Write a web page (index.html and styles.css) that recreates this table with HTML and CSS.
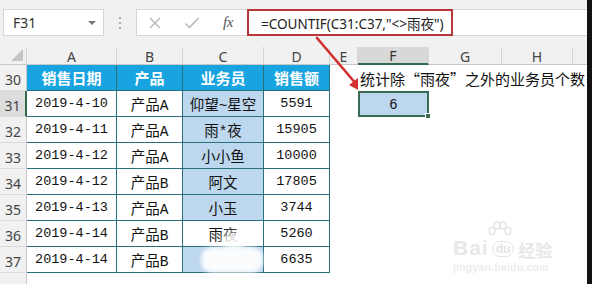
FILE: index.html
```html
<!DOCTYPE html>
<html lang="zh-CN">
<head>
<meta charset="utf-8">
<title>COUNTIF</title>
<link rel="stylesheet" href="styles.css">
</head>
<body>
<div class="frame">
  <div class="app">
    <div class="toolbar">
      <div class="namebox">
        <span class="name">F31</span>
        <span class="caret"></span>
      </div>
      <div class="dots"><i></i><i></i><i></i></div>
      <div class="fbar">
        <div class="fbtns">
          <svg class="ico" width="14" height="14" viewBox="0 0 14 14"><path d="M2 2 L12 12 M12 2 L2 12" stroke="#b4b4b4" stroke-width="1.3" fill="none"/></svg>
          <svg class="ico" width="16" height="14" viewBox="0 0 16 14"><path d="M1.5 7.5 L5.5 11.5 L14.5 2" stroke="#b4b4b4" stroke-width="1.4" fill="none"/></svg>
          <span class="fx">fx</span>
        </div>
        <div class="formula">=COUNTIF(C31:C37,"&lt;&gt;雨夜")</div>
      </div>
    </div>

    <div class="sheet">
      <div class="ch corner"><span class="tri"></span></div>
      <div class="ch">A</div><div class="ch">B</div><div class="ch">C</div><div class="ch">D</div>
      <div class="ch">E</div><div class="ch sel">F</div><div class="ch">G</div><div class="ch">H</div><div class="ch last"></div>

      <div class="rh">30</div>
      <div class="c th">销售日期</div><div class="c th">产品</div><div class="c th">业务员</div><div class="c th">销售额</div>
      <div class="c e"></div><div class="c note">统计除“雨夜”之外的业务员个数</div><div class="c"></div><div class="c"></div><div class="c"></div>

      <div class="rh rsel">31</div>
      <div class="c t num">2019-4-10</div><div class="c t">产品A</div><div class="c t hl">仰望~星空</div><div class="c t num">5591</div>
      <div class="c e"></div><div class="c active">6<span class="handle"></span></div><div class="c"></div><div class="c"></div><div class="c"></div>

      <div class="rh">32</div>
      <div class="c t num">2019-4-11</div><div class="c t">产品A</div><div class="c t hl">雨*夜</div><div class="c t num">15905</div>
      <div class="c e"></div><div class="c"></div><div class="c"></div><div class="c"></div><div class="c"></div>

      <div class="rh">33</div>
      <div class="c t num">2019-4-12</div><div class="c t">产品A</div><div class="c t hl">小小鱼</div><div class="c t num">10000</div>
      <div class="c e"></div><div class="c"></div><div class="c"></div><div class="c"></div><div class="c"></div>

      <div class="rh">34</div>
      <div class="c t num">2019-4-12</div><div class="c t">产品B</div><div class="c t hl">阿文</div><div class="c t num">17805</div>
      <div class="c e"></div><div class="c"></div><div class="c"></div><div class="c"></div><div class="c"></div>

      <div class="rh">35</div>
      <div class="c t num">2019-4-13</div><div class="c t">产品A</div><div class="c t hl">小玉</div><div class="c t num">3744</div>
      <div class="c e"></div><div class="c"></div><div class="c"></div><div class="c"></div><div class="c"></div>

      <div class="rh">36</div>
      <div class="c t num">2019-4-14</div><div class="c t">产品B</div><div class="c t">雨夜</div><div class="c t num">5260</div>
      <div class="c e"></div><div class="c"></div><div class="c"></div><div class="c"></div><div class="c"></div>

      <div class="rh">37</div>
      <div class="c t num">2019-4-14</div><div class="c t">产品B</div><div class="c t hl"></div><div class="c t num">6635</div>
      <div class="c e"></div><div class="c"></div><div class="c"></div><div class="c"></div><div class="c"></div>

      <div class="rh"></div>
      <div class="c"></div><div class="c"></div><div class="c"></div><div class="c"></div>
      <div class="c"></div><div class="c"></div><div class="c"></div><div class="c"></div><div class="c"></div>
    </div>

    <div class="redbox"></div>
    <svg class="arrow" width="80" height="80" viewBox="0 0 80 80">
      <path d="M4 4 L44 51" stroke="#d22f2f" stroke-width="2.6" fill="none" stroke-linecap="round"/>
      <path d="M49 58 L36 51 L45 44 Z" fill="#d22f2f"/>
    </svg>
    <div class="blot"></div>
    <div class="blot2"></div>
    <div class="watermark">
      <svg class="paw" width="26" height="18" viewBox="0 0 26 18">
        <g fill="none" stroke="#e4e4e4" stroke-width="1.4">
          <ellipse cx="5" cy="10" rx="3" ry="3.5"/>
          <ellipse cx="10" cy="4.5" rx="3" ry="3.5"/>
          <ellipse cx="16" cy="4.5" rx="3" ry="3.5"/>
          <ellipse cx="21" cy="10" rx="3" ry="3.5"/>
        </g>
      </svg>
      <div class="wm-top"><span class="wm-bai">Bai</span><span class="wm-du">du</span><span class="wm-jy">经验</span></div>
      <div class="wm-url">jingyan.baidu.com</div>
    </div>
  </div>
  <div class="edge"></div>
</div>
</body>
</html>
```

FILE: styles.css
```css
* { box-sizing: border-box; }
html, body { margin: 0; padding: 0; }
body { width: 592px; height: 284px; overflow: hidden; background: #fff; font-family: "Noto Sans", "Noto Sans CJK SC", sans-serif; }

.frame { display: flex; width: 592px; height: 284px; }
.app { position: relative; width: 587px; height: 284px; overflow: hidden; background: #fff; }
.edge { width: 5px; height: 284px; background: #111; }

.toolbar { height: 47px; background: #f1f1f1; display: flex; align-items: flex-start; padding: 9px 0 0 3px; }
.namebox { width: 101px; height: 27px; background: #fff; border: 1px solid #d6d6d6; display: flex; align-items: center; justify-content: space-between; padding: 0 7px 0 9px; }
.name { font-size: 14px; color: #333; }
.caret { width: 0; height: 0; border-left: 4px solid transparent; border-right: 4px solid transparent; border-top: 4px solid #777; }
.dots { width: 32px; height: 27px; display: flex; flex-direction: column; align-items: center; justify-content: center; gap: 3px; }
.dots i { display: block; width: 2px; height: 2px; background: #aaa; }
.fbar { flex: 1; height: 27px; background: #fff; border: 1px solid #d6d6d6; border-right: none; display: flex; align-items: center; }
.fbtns { width: 111px; display: flex; align-items: center; padding-left: 11px; gap: 0; }
.fbtns .ico:first-child { margin-right: 22px; }
.fbtns .ico:nth-child(2) { margin-right: 23px; }
.fx { font-family: "Liberation Serif", serif; font-style: italic; font-size: 15px; color: #555; letter-spacing: -0.5px; }
.formula { font-family: "Noto Sans", "Noto Sans CJK SC", sans-serif; font-size: 13.5px; color: #222; padding-left: 13px; white-space: nowrap; }

.sheet { display: grid; grid-template-columns: 27px 90px 66px 81px 66px 28px 71px 73px 71px 14px; grid-template-rows: 18px repeat(8, 26px) 20px; }
.ch { background: #f1f1f1; border-right: 1px solid #d4d4d4; border-bottom: 1px solid #c8c8c8; font-family: "Noto Sans", sans-serif; font-size: 14px; color: #444; display: flex; align-items: center; justify-content: center; line-height: 1; padding-top: 2px; }
.ch.sel { background: #d8d8d8; border-bottom: 2px solid #2f6a4c; color: #333; }
.ch.last { border-right: none; }
.corner { position: relative; }
.tri { position: absolute; right: 3px; bottom: 3px; width: 0; height: 0; border-left: 12px solid transparent; border-bottom: 12px solid #c4c4c4; }

.rh { background: #f1f1f1; border-right: 1px solid #c8c8c8; border-bottom: 1px solid #dadada; font-family: "Noto Sans", sans-serif; font-size: 14px; color: #444; display: flex; align-items: flex-end; justify-content: center; padding-bottom: 1px; line-height: 1.2; }
.rh.rsel { background: #dcdcdc; border-right: 2px solid #2f6a4c; }

.c { background: #fff; display: flex; align-items: center; justify-content: center; font-family: "Noto Sans CJK SC", sans-serif; font-size: 14.5px; color: #111; white-space: nowrap; }
.c.th { background: #18a3e1; color: #fff; font-weight: 700; font-size: 15px; border-right: 1px solid #2a6f7d; border-bottom: 1px solid #2a6f7d; }
.c.t { border-right: 1px solid #2a6f7d; border-bottom: 1px solid #2a6f7d; font-family: "Liberation Mono", "Noto Sans CJK SC", monospace; font-size: 14.5px; }
.c.t.num { font-size: 13.5px; }
.c.hl { background: #bdd7ee; }
.c.note { justify-content: flex-start; padding-left: 2px; overflow: visible; font-size: 15px; position: relative; z-index: 1; }
.c.active { position: relative; background: #bdd7ee; border: 2px solid #3a6b55; font-family: "Liberation Sans", sans-serif; font-size: 14px; }
.handle { position: absolute; right: -4px; bottom: -4px; width: 6px; height: 6px; background: #3a6b55; border: 1px solid #fff; }

.redbox { position: absolute; left: 247px; top: 9px; width: 206px; height: 27px; border: 2.5px solid #b8353a; }
.arrow { position: absolute; left: 313px; top: 34px; }

.blot { position: absolute; left: 201px; top: 247px; width: 62px; height: 26px; background: rgba(255,255,255,0.92); border-radius: 12px; filter: blur(2px); }
.blot2 { position: absolute; left: 222px; top: 232px; width: 24px; height: 18px; background: rgba(255,255,255,0.85); border-radius: 9px; filter: blur(3px); }

.watermark { position: absolute; left: 453px; top: 221px; color: #e8e8e8; font-family: "Liberation Sans", sans-serif; }
.paw { display: block; margin-left: 34px; margin-bottom: -2px; }
.wm-top { display: flex; align-items: flex-end; gap: 1px; }
.wm-bai { font-size: 21px; font-weight: 700; line-height: 1; letter-spacing: 1px; }
.wm-du { font-size: 12px; font-weight: 700; line-height: 1; border: 1.4px solid #e4e4e4; color: #e4e4e4; border-radius: 8px; padding: 1px 3px; margin: 0 3px 1px 2px; }
.wm-jy { font-family: "Noto Sans CJK SC", sans-serif; font-size: 17px; font-weight: 700; line-height: 1; }
.wm-url { font-size: 10.5px; font-weight: 700; margin-top: 3px; letter-spacing: 0.2px; color: #ececec; }
```
